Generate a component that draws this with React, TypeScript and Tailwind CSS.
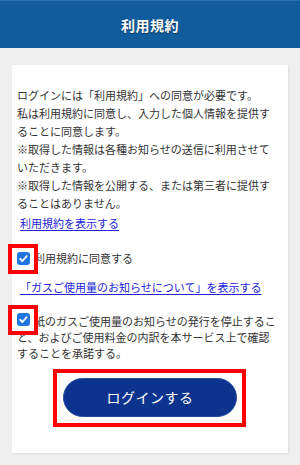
import type { ReactNode } from "react";

function CheckMark() {
	return (
		<span className="relative inline-block h-[13px] w-[13px] shrink-0 rounded-[3px] bg-[#1f74e0]">
			<svg viewBox="0 0 13 13" className="absolute inset-0 h-[13px] w-[13px]">
				<path
					d="M3.2 6.8 L5.4 9 L9.8 4.2"
					fill="none"
					stroke="#ffffff"
					strokeWidth="1.8"
					strokeLinecap="round"
					strokeLinejoin="round"
				/>
			</svg>
			{/* red annotation frame */}
			<span className="pointer-events-none absolute -left-[9px] -top-[8px] h-[30px] w-[30px] border-4 border-[#ff0000]" />
		</span>
	);
}

function TextLink({ children }: { children: ReactNode }) {
	return (
		<a href="#" className="text-[#2323d8] underline underline-offset-2">
			{children}
		</a>
	);
}

export default function App() {
	return (
		<div className="min-h-[465px] w-[300px] bg-[#efefef] font-['Noto_Sans_CJK_JP',sans-serif] text-[#333333]">
			<header className="flex h-[48px] items-center justify-center border-t border-[#2b6fab] bg-[#115c9c] pt-[2px]">
				<h1 className="text-[14px] font-bold tracking-[0.5px] text-white [text-shadow:0_1px_1px_rgba(0,0,0,0.45)]">
					利用規約
				</h1>
			</header>

			<main className="px-[12px] pt-[17px] pb-[12px]">
				<section className="bg-white px-[5px] pt-[21px] pb-[36px] shadow-[1px_1px_2px_rgba(0,0,0,0.08)]">
					<p className="whitespace-nowrap text-[11px] leading-[18px]">
						ログインには「利用規約」への同意が必要です。
						<br />
						私は利用規約に同意し、入力した個人情報を提供す
						<br />
						ることに同意します。
						<br />
						※取得した情報は各種お知らせの送信に利用させて
						<br />
						いただきます。
						<br />
						※取得した情報を公開する、または第三者に提供す
						<br />
						ることはありません。
					</p>

					<p className="mt-[2px] pl-[3px] text-[11px] leading-[18px]">
						<TextLink>利用規約を表示する</TextLink>
					</p>

					<label className="mt-[17px] flex items-center text-[11px] leading-[18px]">
						<CheckMark />
						<span className="ml-[4px]">利用規約に同意する</span>
					</label>

					<p className="mt-[11px] whitespace-nowrap pl-[3px] text-[11px] leading-[18px]">
						<TextLink>「ガスご使用量のお知らせについて」を表示する</TextLink>
					</p>

					<label className="mt-[17px] block whitespace-nowrap text-[11px] leading-[16px]">
						<span className="mr-[4px] inline-block align-top">
							<CheckMark />
						</span>
						紙のガスご使用量のお知らせの発行を停止するこ
						<br />
						と、およびご使用料金の内訳を本サービス上で確認
						<br />
						することを承諾する。
					</label>

					<div className="relative mx-auto mt-[17px] h-[39px] w-[174px]">
						<button
							type="button"
							className="h-full w-full rounded-full border border-[#2a4d9e] bg-[#0c348f] text-[14px] tracking-[0.5px] text-white"
						>
							ログインする
						</button>
						<span className="pointer-events-none absolute -left-[10px] -top-[9px] -right-[9px] -bottom-[10px] border-4 border-[#ff0000]" />
					</div>
				</section>
			</main>
		</div>
	);
}
